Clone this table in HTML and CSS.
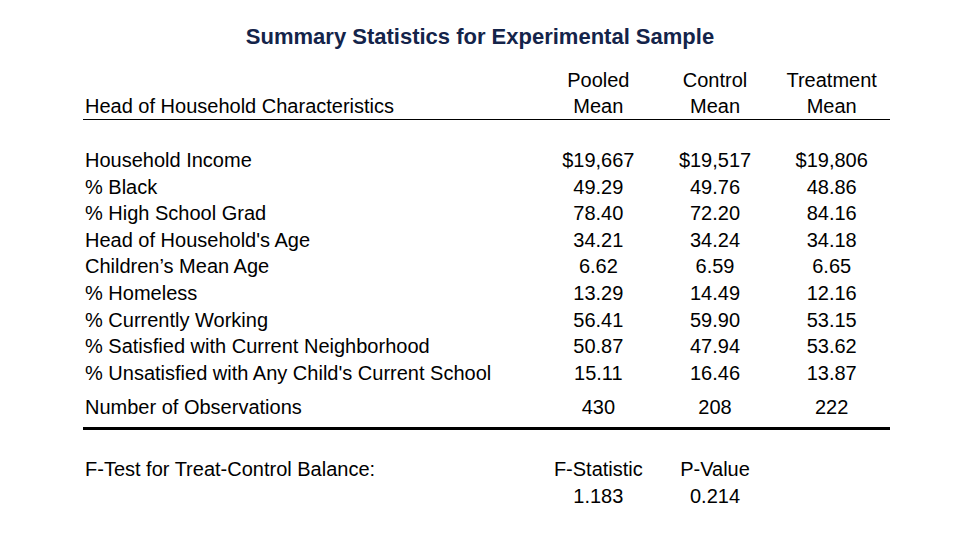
FILE: index.html
```html
<!DOCTYPE html>
<html lang="en">
<head>
<meta charset="utf-8">
<title>Summary Statistics for Experimental Sample</title>
<link rel="stylesheet" href="styles.css">
</head>
<body>
<main class="slide">
  <h1 class="title">Summary Statistics for Experimental Sample</h1>
  <div class="table">
    <div class="row head">
      <div class="label">Head of Household Characteristics</div>
      <div class="num">Pooled<br>Mean</div>
      <div class="num">Control<br>Mean</div>
      <div class="num">Treatment<br>Mean</div>
    </div>
    <div class="row body">
      <div class="label">Household Income<br>% Black<br>% High School Grad<br>Head of Household's Age<br>Children’s Mean Age<br>% Homeless<br>% Currently Working<br>% Satisfied with Current Neighborhood<br>% Unsatisfied with Any Child's Current School</div>
      <div class="num">$19,667<br>49.29<br>78.40<br>34.21<br>6.62<br>13.29<br>56.41<br>50.87<br>15.11</div>
      <div class="num">$19,517<br>49.76<br>72.20<br>34.24<br>6.59<br>14.49<br>59.90<br>47.94<br>16.46</div>
      <div class="num">$19,806<br>48.86<br>84.16<br>34.18<br>6.65<br>12.16<br>53.15<br>53.62<br>13.87</div>
    </div>
    <div class="row obs">
      <div class="label">Number of Observations</div>
      <div class="num">430</div>
      <div class="num">208</div>
      <div class="num">222</div>
    </div>
    <div class="row ftest">
      <div class="label">F-Test for Treat-Control Balance:</div>
      <div class="num">F-Statistic<br>1.183</div>
      <div class="num">P-Value<br>0.214</div>
      <div class="num"></div>
    </div>
  </div>
</main>
</body>
</html>
```
FILE: styles.css
```css
html, body {
  margin: 0;
  padding: 0;
  background: #ffffff;
}

.slide {
  width: 960px;
  height: 540px;
  box-sizing: border-box;
  padding-top: 25px;
  font-family: "Liberation Sans", Arial, sans-serif;
  color: #000000;
}

.title {
  margin: 0 0 18px 0;
  font-size: 22px;
  line-height: 24px;
  font-weight: bold;
  color: #14244a;
  text-align: center;
}

.table {
  width: 807px;
  margin-left: 83px;
}

.row {
  display: grid;
  grid-template-columns: 457px 116.7px 116.7px 116.6px;
  font-size: 20px;
  line-height: 26.6px;
}

.label {
  padding-left: 2px;
  white-space: nowrap;
}

.num {
  text-align: center;
}

.head {
  align-items: end;
  line-height: 26px;
  border-bottom: 1px solid #000000;
}

.body {
  padding-top: 27px;
}

.obs {
  padding-top: 8px;
  padding-bottom: 6px;
  border-bottom: 3px solid #000000;
}

.ftest {
  padding-top: 26px;
}
```
